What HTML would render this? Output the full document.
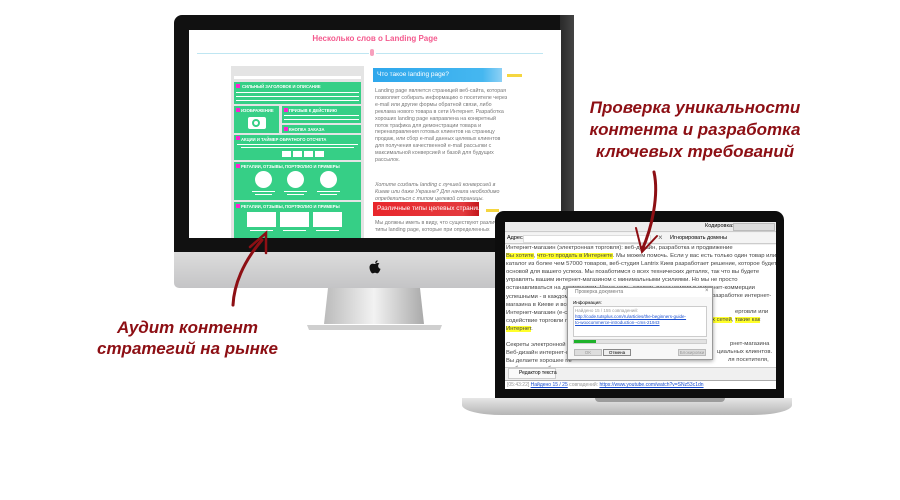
<!DOCTYPE html>
<html><head><meta charset="utf-8"><style>
*{margin:0;padding:0;box-sizing:border-box}
body{width:900px;height:500px;background:#fff;position:relative;overflow:hidden;font-family:"Liberation Sans",sans-serif}
.a{position:absolute}
.g{background:#36cf86}
.w{background:#fff}
.n{position:absolute;width:4px;height:4px;background:#ff1fd0}
.cap{position:absolute;color:#fff;font-size:4.2px;font-weight:bold;white-space:nowrap}
.t{font-size:5.3px;color:#777;line-height:6.9px}
.lt{font-size:5.9px;color:#444;line-height:8.1px;white-space:nowrap}
.red{color:#8d0f14;font-weight:bold;font-style:italic;font-size:17px;line-height:22px;text-align:center;white-space:nowrap;font-family:"Liberation Sans",sans-serif}
.hl{background:#ffff2a}
</style></head><body>
<!-- iMac -->
<div class="a" style="left:174px;top:15px;width:400px;height:240px;background:#111;border-radius:8px 8px 0 0"></div>
<div class="a" style="left:560px;top:15px;width:14px;height:240px;background:linear-gradient(90deg,#2a2a2a,#444)"></div>
<div class="a" style="left:174px;top:252px;width:400px;height:36px;background:linear-gradient(#dcdcdc,#c4c4c6);border-radius:0 0 5px 5px"></div>
<svg class="a" style="left:366px;top:258px" width="18" height="20" viewBox="0 0 18 20"><path d="M9 6c1-1 3-1.5 4.5-.5-1.5 1-2 3-.3 4.8.5.4 1.3.6 1.3.6-.5 2-2 4.5-3.3 4.5-1 0-1.300-.6-2.200-.6s-1.4.6-2.3.6C5.3 15.4 3.5 12 3.5 9.5 3.5 7 5 5.7 6.6 5.700c1 0 1.6.5 2.4.3zM9.2 5c0-1.5 1-2.6 2.4-2.8.1 1.5-1 2.8-2.4 2.8z" fill="#111"/></svg>
<svg class="a" style="left:300px;top:288px" width="160" height="45"><defs><linearGradient id="st" x1="0" x2="1"><stop offset="0" stop-color="#bbb"/><stop offset=".5" stop-color="#f2f2f2"/><stop offset="1" stop-color="#aaa"/></linearGradient></defs><path d="M28 0H120L124 36H24Z" fill="url(#st)"/><path d="M7 37H142L140 42H9Z" fill="#cfcfcf"/></svg>
<!-- iMac screen -->
<div class="a" style="left:189px;top:30px;width:372px;height:208px;background:#fff;overflow:hidden">
 <div class="a" style="left:0;top:4px;width:372px;text-align:center;color:#f45a8e;font-size:8px;font-weight:bold">Несколько слов о Landing Page</div>
 <div class="a" style="left:8px;top:23px;width:172px;height:1px;background:#bfe6f2"></div>
 <div class="a" style="left:187px;top:23px;width:167px;height:1px;background:#bfe6f2"></div>
 <div class="a" style="left:181px;top:19px;width:4px;height:7px;background:#f7a0bd;border-radius:2px"></div>
 <div class="a" style="left:42px;top:36px;width:133px;height:180px;background:#e4e4e4"></div>
 <div class="a" style="left:45px;top:46px;width:127px;height:3px;background:#fff"></div>
 <div class="a g" style="left:45px;top:52px;width:127px;height:22px"></div>
 <div class="n" style="left:47px;top:54px"></div><div class="cap" style="left:53px;top:54px">СИЛЬНЫЙ ЗАГОЛОВОК И ОПИСАНИЕ</div>
 <div class="a w" style="left:47px;top:62px;width:123px;height:1px"></div><div class="a w" style="left:47px;top:66px;width:123px;height:1px"></div><div class="a w" style="left:47px;top:70px;width:123px;height:1px"></div>
 <div class="a g" style="left:45px;top:76px;width:45px;height:27px"></div>
 <div class="n" style="left:47px;top:78px"></div><div class="cap" style="left:52px;top:78px">ИЗОБРАЖЕНИЕ</div>
 <div class="a w" style="left:59px;top:87px;width:18px;height:12px;border-radius:2px"></div><div class="a" style="left:63px;top:89px;width:8px;height:8px;border:2px solid #36cf86;border-radius:50%"></div>
 <div class="a g" style="left:93px;top:76px;width:79px;height:17px"></div>
 <div class="n" style="left:95px;top:78px"></div><div class="cap" style="left:100px;top:78px">ПРИЗЫВ К ДЕЙСТВИЮ</div>
 <div class="a w" style="left:95px;top:85px;width:75px;height:1px"></div><div class="a w" style="left:95px;top:89px;width:75px;height:1px"></div>
 <div class="a g" style="left:93px;top:95px;width:79px;height:8px"></div>
 <div class="n" style="left:95px;top:97px"></div><div class="cap" style="left:100px;top:97px">КНОПКА ЗАКАЗА</div>
 <div class="a g" style="left:45px;top:105px;width:127px;height:25px"></div>
 <div class="n" style="left:47px;top:106px"></div><div class="cap" style="left:52px;top:107px">АКЦИИ И ТАЙМЕР ОБРАТНОГО ОТСЧЕТА</div>
 <div class="a w" style="left:48px;top:114px;width:121px;height:1px"></div><div class="a w" style="left:52px;top:117px;width:113px;height:1px"></div>
 <div class="a w" style="left:93px;top:121px;width:9px;height:6px"></div><div class="a w" style="left:104px;top:121px;width:9px;height:6px"></div><div class="a w" style="left:115px;top:121px;width:9px;height:6px"></div><div class="a w" style="left:126px;top:121px;width:9px;height:6px"></div>
 <div class="a g" style="left:45px;top:132px;width:127px;height:38px"></div>
 <div class="n" style="left:47px;top:134px"></div><div class="cap" style="left:52px;top:134px">РЕГАЛИИ, ОТЗЫВЫ, ПОРТФОЛИО И ПРИМЕРЫ</div>
 <div class="a w" style="left:66px;top:141px;width:17px;height:17px;border-radius:50%"></div><div class="a w" style="left:98px;top:141px;width:17px;height:17px;border-radius:50%"></div><div class="a w" style="left:131px;top:141px;width:17px;height:17px;border-radius:50%"></div>
 <div class="a w" style="left:63px;top:161px;width:23px;height:1px"></div><div class="a w" style="left:95px;top:161px;width:23px;height:1px"></div><div class="a w" style="left:128px;top:161px;width:23px;height:1px"></div>
 <div class="a w" style="left:66px;top:164px;width:17px;height:1px"></div><div class="a w" style="left:98px;top:164px;width:17px;height:1px"></div><div class="a w" style="left:131px;top:164px;width:17px;height:1px"></div>
 <div class="a g" style="left:45px;top:172px;width:127px;height:40px"></div>
 <div class="n" style="left:47px;top:174px"></div><div class="cap" style="left:52px;top:174px">РЕГАЛИИ, ОТЗЫВЫ, ПОРТФОЛИО И ПРИМЕРЫ</div>
 <div class="a w" style="left:58px;top:182px;width:29px;height:15px"></div><div class="a w" style="left:91px;top:182px;width:29px;height:15px"></div><div class="a w" style="left:124px;top:182px;width:29px;height:15px"></div>
 <div class="a w" style="left:61px;top:200px;width:23px;height:1px"></div><div class="a w" style="left:94px;top:200px;width:23px;height:1px"></div><div class="a w" style="left:127px;top:200px;width:23px;height:1px"></div>
 <div class="a" style="left:184px;top:38px;width:129px;height:14px;background:linear-gradient(90deg,#2ea7ec,#45b7f0 85%,#8dd0f5)"></div>
 <div class="a" style="left:188px;top:41px;color:#fff;font-size:6.5px">Что такое landing page?</div>
 <div class="a" style="left:318px;top:44px;width:15px;height:3px;background:#f5d640"></div>
 <div class="a t" style="left:186px;top:58px;width:135px">Landing page является страницей веб-сайта, которая позволяет собирать информацию о посетителе через e-mail или другие формы обратной связи, либо реклама нового товара в сети Интернет. Разработка хороших landing page направлена на конкретный поток трафика для демонстрации товара и перенаправления готовых клиентов на страницу продаж, или сбор e-mail данных целевых клиентов для получения качественной e-mail рассылки с максимальной конверсией и базой для будущих рассылок.</div>
 <div class="a t" style="left:186px;top:152px;width:135px;font-style:italic">Хотите создать landing с лучшей конверсией в Киеве или даже Украине? Для начала необходимо определиться с типом целевой страницы.</div>
 <div class="a" style="left:184px;top:172px;width:106px;height:14px;background:linear-gradient(90deg,#e8262b,#e43a3e 85%,#c2161b)"></div>
 <div class="a" style="left:188px;top:175px;color:#fff;font-size:6.5px">Различные типы целевых страниц</div>
 <div class="a" style="left:297px;top:179px;width:13px;height:3px;background:#f5d640"></div>
 <div class="a t" style="left:186px;top:190px;width:135px">Мы должны иметь в виду, что существуют различные типы landing page, которые при определенных</div>
</div>
<!-- laptop -->
<div class="a" style="left:495px;top:211px;width:289px;height:190px;background:#0d0d0d;border-radius:9px 9px 0 0"></div>
<div class="a" style="left:462px;top:398px;width:330px;height:17px;background:linear-gradient(#e6e6e6,#b5b5b5);border-radius:0 0 40px 40px/0 0 10px 10px"></div>
<div class="a" style="left:595px;top:398px;width:130px;height:4px;background:#9c9c9c;border-radius:0 0 4px 4px"></div>
<div class="a" style="left:505px;top:222px;width:271px;height:167px;background:#f0f0f0;overflow:hidden">
 <div class="a" style="left:0;top:0;width:271px;height:10px;background:#ececec;border-bottom:1px solid #ccc"></div>
 <div class="a" style="left:200px;top:1px;font-size:5.5px;color:#000">Кодировка:</div>
 <div class="a" style="left:228px;top:1px;width:42px;height:8px;background:#ddd;border:1px solid #bbb"></div>
 <div class="a" style="left:0;top:11px;width:271px;height:11px;background:#f4f4f4;border-bottom:1px solid #ccc"></div>
 <div class="a" style="left:2px;top:13px;font-size:5.5px">Адрес</div>
 <div class="a" style="left:18px;top:13px;width:128px;height:8px;background:#fff;border:1px solid #ddd"></div>
 <div class="a" style="left:153px;top:11px;font-size:8px;color:#666">×</div>
 <div class="a" style="left:165px;top:13px;font-size:5.5px">Игнорировать домены</div>
 <div class="a" style="left:0;top:23px;width:271px;height:122px;background:#fff;overflow:hidden">
 <div class="a lt" style="left:1px;top:-1px">Интернет-магазин (электронная торговля): веб-дизайн, разработка и продвижение<br><span class="hl">Вы хотите</span>, <span class="hl">что-то продать в Интернете</span>. Мы можем помочь. Если у вас есть только один товар или<br>каталог из более чем 57000 товаров, веб-студия Lantrix Киев разработает решение, которое будет<br>основой для вашего успеха. Мы позаботимся о всех технических деталях, так что вы будете<br>управлять вашим интернет-магазином с минимальными усилиями. Но мы не просто<br>останавливаться на достигнутом. Наша цель, сделать ваши усилия  в интернет-коммерции<br>успешными - в каждом<br>магазина в Киеве и всей<br>Интернет-магазин (e-со<br>содействие торговли пр<br><span class="hl">Интернет</span>.<br><br>Секреты электронной то<br>Веб-дизайн интернет-ма<br>Вы делаете хорошее пе<br>чтобы решить, будут ле<br>выбрать, помогите пол<br>Одной из основных ключевых целей интернет-магазина (e-commerce): превратить посетителей в</div>
 <div class="a lt" style="left:207px;top:47px">разработке интернет-</div>
 <div class="a lt" style="left:230px;top:63px">ерговли или</div>
 <div class="a lt" style="left:207px;top:71px"><span class="hl">х сетей</span>, <span class="hl">такие как</span></div>
 <div class="a lt" style="left:225px;top:95px">рнет-магазина</div>
 <div class="a lt" style="left:212px;top:103px">циальных клиентов.</div>
 <div class="a lt" style="left:223px;top:111px">ля посетителя,</div>
 </div>
 <div class="a" style="left:0;top:145px;width:271px;height:13px;background:#f0f0f0;border-top:1px solid #ccc"></div>
 <div class="a" style="left:3px;top:146px;width:48px;height:11px;background:#fafafa;border:1px solid #ccc;font-size:5px;line-height:9px;padding-left:10px;white-space:nowrap">Редактор текста</div>
 <div class="a" style="left:0;top:158px;width:271px;height:9px;background:#fff;border-top:1px solid #aaa;font-size:5px;line-height:8px;color:#1a4fd0;padding-left:2px;white-space:nowrap"><span style="color:#999">[05:43:22]</span> <u>Найдено 15 / 25</u> <span style="color:#999">совпадений:</span> <u>https://www.youtube.com/watch?v=SNz53c1dn</u></div>
 <div class="a" style="left:62px;top:65px;width:146px;height:73px;background:#f7f7f7;border:1px solid #999;box-shadow:0 1px 4px rgba(0,0,0,.4)">
  <div class="a" style="left:0;top:0;width:144px;height:9px;background:#fff;font-size:5px;line-height:9px;padding-left:7px;color:#777">Проверка документа</div>
  <div class="a" style="left:137px;top:0;font-size:6px;color:#777">×</div>
  <div class="a" style="left:5px;top:12px;font-size:4.5px">Информация:</div>
  <div class="a" style="left:5px;top:18px;width:134px;height:31px;background:#fff;border:1px solid #ccc;font-size:4.5px;line-height:6px;padding:1px;color:#1a4fd0;white-space:nowrap;overflow:hidden"><span style="color:#999">Найдено 15 / 155 совпадений:</span><br><u>http://code.tutsplus.com/ru/articles/the-beginners-guide-</u><br><u>to-woocommerce-introduction--cms-21943</u></div>
  <div class="a" style="left:5px;top:51px;width:134px;height:5px;background:#e2e2e2;border:1px solid #ccc"><div style="width:22px;height:3px;background:#1eb22a"></div></div>
  <div class="a" style="left:6px;top:61px;width:28px;height:7px;background:#ddd;border:1px solid #bbb;font-size:4.5px;text-align:center;line-height:6px;color:#999">OK</div>
  <div class="a" style="left:35px;top:61px;width:28px;height:7px;background:#eee;border:1px solid #888;font-size:4.5px;text-align:center;line-height:6px">Отмена</div>
  <div class="a" style="left:110px;top:61px;width:28px;height:7px;background:#ddd;border:1px solid #bbb;font-size:4.5px;text-align:center;line-height:6px;color:#999">Блокировки</div>
 </div>
</div>
<div class="a red" style="left:580px;top:97px;width:230px">Проверка уникальности<br>контента и разработка<br>ключевых требований</div>
<div class="a red" style="left:85px;top:317px;width:205px;line-height:21px">Аудит контент<br>стратегий на рынке</div>
<svg class="a" style="left:0;top:0" width="900" height="500">
 <path d="M233 305C234 285 243 262 262 240" stroke="#8d0f14" stroke-width="3" fill="none" stroke-linecap="round"/>
 <path d="M250 247L266 233L266 253" stroke="#8d0f14" stroke-width="2.5" fill="none" stroke-linecap="round"/>
 <path d="M654 172C659 195 652 228 642 250" stroke="#8d0f14" stroke-width="3" fill="none" stroke-linecap="round"/>
 <path d="M636 228L642 252L657 236" stroke="#8d0f14" stroke-width="2" fill="none" stroke-linecap="round"/>
</svg>
</body></html>
